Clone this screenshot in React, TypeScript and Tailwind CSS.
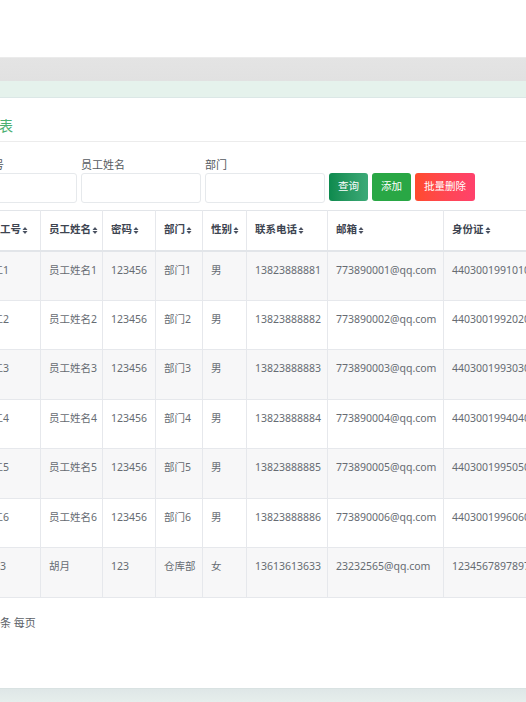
import React from "react";

const rows = [
  ["员工1", "员工姓名1", "123456", "部门1", "男", "13823888881", "773890001@qq.com", "440300199101010011"],
  ["员工2", "员工姓名2", "123456", "部门2", "男", "13823888882", "773890002@qq.com", "440300199202020022"],
  ["员工3", "员工姓名3", "123456", "部门3", "男", "13823888883", "773890003@qq.com", "440300199303030033"],
  ["员工4", "员工姓名4", "123456", "部门4", "男", "13823888884", "773890004@qq.com", "440300199404040044"],
  ["员工5", "员工姓名5", "123456", "部门5", "男", "13823888885", "773890005@qq.com", "440300199505050055"],
  ["员工6", "员工姓名6", "123456", "部门6", "男", "13823888886", "773890006@qq.com", "440300199606060066"],
  ["1003", "胡月", "123", "仓库部", "女", "13613613633", "23232565@qq.com", "123456789789789789"],
];

const headers = ["员工工号", "员工姓名", "密码", "部门", "性别", "联系电话", "邮箱", "身份证", "地址"];
const widths = ["w-[70px]", "w-[62px]", "w-[53px]", "w-[47px]", "w-[44px]", "w-[81px]", "w-[116px]", "w-[160px]", "w-[120px]"];

function SortIcon() {
  return (
    <svg width="6" height="9" viewBox="0 0 6 9" className="inline-block ml-[1px] -mt-[1px]">
      <path d="M0.5 4 L3 1 L5.5 4 Z" fill="#4a5160" />
      <path d="M0.5 5 L3 8 L5.5 5 Z" fill="#4a5160" />
    </svg>
  );
}

export default function App() {
  return (
    <div className="w-[526px] h-[702px] overflow-hidden bg-white font-['Noto_Sans','Noto_Sans_CJK_SC',sans-serif]">
      {/* top bars */}
      <div className="h-[57px] bg-white" />
      <div className="h-[24px] border-t border-[#ebebeb] bg-gradient-to-b from-[#e4e4e4] to-[#e1e1e1]" />
      <div className="h-[17px] bg-[#e5f2ec] border-b border-[#dbe7e6]" />

      {/* card */}
      <div className="h-[590px] bg-white overflow-hidden">
        <div className="h-[44px] border-b border-[#ececec] pt-[18px]">
          <h2 className="-ml-[43px] text-[14px] leading-[20px] text-[#4cb073] whitespace-nowrap">员工列表</h2>
        </div>

        {/* search */}
        <div className="-ml-[43px] pt-[15px] flex items-end gap-[4px] whitespace-nowrap">
          {["员工工号", "员工姓名", "部门"].map((l, i) => (
            <div key={l} className="flex flex-col">
              <span className={`text-[11px] leading-[16px] text-[#555a60] ${i === 0 ? "ml-[3px]" : ""}`}>{l}</span>
              <div className="w-[120px] h-[30px] border border-[#e6e9ec] rounded-[3px] bg-white" />
            </div>
          ))}
          <div className="flex gap-[4px] mb-[2px]">
            <button className="w-[39px] h-[28px] rounded-[3px] text-[10.5px] text-white bg-gradient-to-r from-[#0c8a4e] to-[#3caa78]">查询</button>
            <button className="w-[39px] h-[28px] rounded-[3px] text-[10.5px] text-white bg-[#29a745]">添加</button>
            <button className="w-[60px] h-[28px] rounded-[3px] text-[10.5px] text-white bg-gradient-to-r from-[#ff4b2b] to-[#ff416c]">批量删除</button>
          </div>
        </div>

        {/* table */}
        <table className="mt-[7px] -ml-[30px] w-[753px] table-fixed border-collapse text-[10.5px] whitespace-nowrap">
          <colgroup>
            {widths.map((w, i) => (
              <col key={i} className={w} />
            ))}
          </colgroup>
          <thead>
            <tr className="h-[40px] border-t border-b-2 border-[#e2e5e9]">
              {headers.map((h) => (
                <th key={h} className="border-x border-[#e6e8ec] px-[8px] text-left font-bold text-[#3d4450] overflow-hidden">
                  {h}
                  <SortIcon />
                </th>
              ))}
            </tr>
          </thead>
          <tbody>
            {rows.map((r, i) => (
              <tr key={i} className={`h-[49.5px] border-b border-[#e6e8ec] ${i % 2 === 0 ? "bg-[#f7f7f8]" : "bg-white"}`}>
                {r.map((c, j) => (
                  <td
                    key={j}
                    className={`border-x border-[#e6e8ec] pr-[8px] pt-[10px] align-top leading-[17px] text-[#666b72] overflow-hidden ${j === 0 ? "pl-[11px]" : "pl-[8px]"}`}
                  >
                    {c}
                  </td>
                ))}
                <td className="border-x border-[#e6e8ec] px-[8px] pt-[10px] align-top leading-[17px] text-[#666b72]">广东省深圳市</td>
              </tr>
            ))}
          </tbody>
        </table>

        <div className="-ml-[23px] pt-[17px] text-[11px] leading-[16px] text-[#5c6167] whitespace-nowrap">共 7 条 每页</div>
      </div>

      <div className="h-[14px] border-t border-[#d9e2e2] bg-gradient-to-b from-[#dfe7e7] to-[#e6eeec]" />
    </div>
  );
}
